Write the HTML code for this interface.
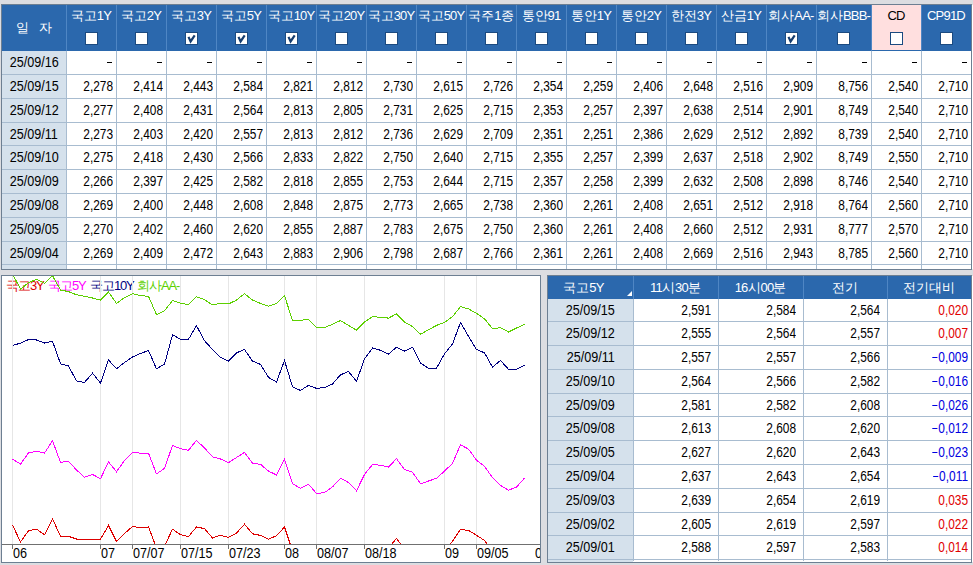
<!DOCTYPE html>
<html lang="ko"><head><meta charset="utf-8"><style>
html,body{margin:0;padding:0}
body{width:973px;height:565px;overflow:hidden;background:#dcdde1;position:relative;font-family:"Liberation Sans",sans-serif;font-size:13px}
body>div{position:absolute}
.t{white-space:nowrap;overflow:hidden}
</style></head><body>
<div style="left:1px;top:4px;width:971px;height:266px;background:#6d7f92"></div>
<div style="left:2px;top:51px;width:969px;height:218px;background:#fff"></div>
<div style="left:2px;top:51px;width:64px;height:218px;background:#d5e1ec"></div>
<div style="left:2px;top:5px;width:969px;height:46px;background:#2b68ad"></div>
<div style="left:872px;top:5px;width:49px;height:45px;background:#ffdfdf"></div>
<div style="left:66px;top:5px;width:1px;height:46px;background:#4f86c4"></div>
<div style="left:116px;top:5px;width:1px;height:46px;background:#4f86c4"></div>
<div style="left:166px;top:5px;width:1px;height:46px;background:#4f86c4"></div>
<div style="left:216px;top:5px;width:1px;height:46px;background:#4f86c4"></div>
<div style="left:266px;top:5px;width:1px;height:46px;background:#4f86c4"></div>
<div style="left:316px;top:5px;width:1px;height:46px;background:#4f86c4"></div>
<div style="left:366px;top:5px;width:1px;height:46px;background:#4f86c4"></div>
<div style="left:416px;top:5px;width:1px;height:46px;background:#4f86c4"></div>
<div style="left:466px;top:5px;width:1px;height:46px;background:#4f86c4"></div>
<div style="left:516px;top:5px;width:1px;height:46px;background:#4f86c4"></div>
<div style="left:566px;top:5px;width:1px;height:46px;background:#4f86c4"></div>
<div style="left:616px;top:5px;width:1px;height:46px;background:#4f86c4"></div>
<div style="left:666px;top:5px;width:1px;height:46px;background:#4f86c4"></div>
<div style="left:716px;top:5px;width:1px;height:46px;background:#4f86c4"></div>
<div style="left:766px;top:5px;width:1px;height:46px;background:#4f86c4"></div>
<div style="left:816px;top:5px;width:1px;height:46px;background:#4f86c4"></div>
<div style="left:871px;top:5px;width:1px;height:46px;background:#4f86c4"></div>
<div style="left:921px;top:5px;width:1px;height:46px;background:#4f86c4"></div>
<div style="left:66px;top:51px;width:1px;height:218px;background:#a8bcd0"></div>
<div style="left:116px;top:51px;width:1px;height:218px;background:#a8bcd0"></div>
<div style="left:166px;top:51px;width:1px;height:218px;background:#a8bcd0"></div>
<div style="left:216px;top:51px;width:1px;height:218px;background:#a8bcd0"></div>
<div style="left:266px;top:51px;width:1px;height:218px;background:#a8bcd0"></div>
<div style="left:316px;top:51px;width:1px;height:218px;background:#a8bcd0"></div>
<div style="left:366px;top:51px;width:1px;height:218px;background:#a8bcd0"></div>
<div style="left:416px;top:51px;width:1px;height:218px;background:#a8bcd0"></div>
<div style="left:466px;top:51px;width:1px;height:218px;background:#a8bcd0"></div>
<div style="left:516px;top:51px;width:1px;height:218px;background:#a8bcd0"></div>
<div style="left:566px;top:51px;width:1px;height:218px;background:#a8bcd0"></div>
<div style="left:616px;top:51px;width:1px;height:218px;background:#a8bcd0"></div>
<div style="left:666px;top:51px;width:1px;height:218px;background:#a8bcd0"></div>
<div style="left:716px;top:51px;width:1px;height:218px;background:#a8bcd0"></div>
<div style="left:766px;top:51px;width:1px;height:218px;background:#a8bcd0"></div>
<div style="left:816px;top:51px;width:1px;height:218px;background:#a8bcd0"></div>
<div style="left:871px;top:51px;width:1px;height:218px;background:#a8bcd0"></div>
<div style="left:921px;top:51px;width:1px;height:218px;background:#a8bcd0"></div>
<div style="left:2px;top:74px;width:969px;height:1px;background:#a8bcd0"></div>
<div style="left:2px;top:98px;width:969px;height:1px;background:#a8bcd0"></div>
<div style="left:2px;top:122px;width:969px;height:1px;background:#a8bcd0"></div>
<div style="left:2px;top:145px;width:969px;height:1px;background:#a8bcd0"></div>
<div style="left:2px;top:169px;width:969px;height:1px;background:#a8bcd0"></div>
<div style="left:2px;top:193px;width:969px;height:1px;background:#a8bcd0"></div>
<div style="left:2px;top:217px;width:969px;height:1px;background:#a8bcd0"></div>
<div style="left:2px;top:241px;width:969px;height:1px;background:#a8bcd0"></div>
<div style="left:2px;top:264px;width:969px;height:1px;background:#a8bcd0"></div>
<div class="t" style="left:2px;top:5px;width:64px;height:46px;line-height:46px;color:#fff;text-align:center">일&nbsp;&nbsp;&nbsp;자</div>
<div class="t" style="left:61px;top:9px;width:60px;height:14px;line-height:14px;color:#fff;text-align:center;overflow:visible">국고<span style="letter-spacing:-0.8px">1Y</span></div>
<div style="left:85px;top:32px;width:11px;height:11px;border:1px solid #1b4a80;background:#fff"></div>
<div class="t" style="left:111px;top:9px;width:60px;height:14px;line-height:14px;color:#fff;text-align:center;overflow:visible">국고<span style="letter-spacing:-0.8px">2Y</span></div>
<div style="left:135px;top:32px;width:11px;height:11px;border:1px solid #1b4a80;background:#fff"></div>
<div class="t" style="left:161px;top:9px;width:60px;height:14px;line-height:14px;color:#fff;text-align:center;overflow:visible">국고<span style="letter-spacing:-0.8px">3Y</span></div>
<div style="left:185px;top:32px;width:11px;height:11px;border:1px solid #1b4a80;background:#fff"><svg width="13" height="13" viewBox="0 0 13 13" style="position:absolute;left:-1px;top:-1px"><path d="M3.5 4.9 L5.6 9.4 L9.7 3.3" stroke="#163e70" stroke-width="2.2" fill="none"/></svg></div>
<div class="t" style="left:211px;top:9px;width:60px;height:14px;line-height:14px;color:#fff;text-align:center;overflow:visible">국고<span style="letter-spacing:-0.8px">5Y</span></div>
<div style="left:235px;top:32px;width:11px;height:11px;border:1px solid #1b4a80;background:#fff"><svg width="13" height="13" viewBox="0 0 13 13" style="position:absolute;left:-1px;top:-1px"><path d="M3.5 4.9 L5.6 9.4 L9.7 3.3" stroke="#163e70" stroke-width="2.2" fill="none"/></svg></div>
<div class="t" style="left:261px;top:9px;width:60px;height:14px;line-height:14px;color:#fff;text-align:center;overflow:visible">국고<span style="letter-spacing:-0.8px">10Y</span></div>
<div style="left:285px;top:32px;width:11px;height:11px;border:1px solid #1b4a80;background:#fff"><svg width="13" height="13" viewBox="0 0 13 13" style="position:absolute;left:-1px;top:-1px"><path d="M3.5 4.9 L5.6 9.4 L9.7 3.3" stroke="#163e70" stroke-width="2.2" fill="none"/></svg></div>
<div class="t" style="left:311px;top:9px;width:60px;height:14px;line-height:14px;color:#fff;text-align:center;overflow:visible">국고<span style="letter-spacing:-0.8px">20Y</span></div>
<div style="left:335px;top:32px;width:11px;height:11px;border:1px solid #1b4a80;background:#fff"></div>
<div class="t" style="left:361px;top:9px;width:60px;height:14px;line-height:14px;color:#fff;text-align:center;overflow:visible">국고<span style="letter-spacing:-0.8px">30Y</span></div>
<div style="left:385px;top:32px;width:11px;height:11px;border:1px solid #1b4a80;background:#fff"></div>
<div class="t" style="left:411px;top:9px;width:60px;height:14px;line-height:14px;color:#fff;text-align:center;overflow:visible">국고<span style="letter-spacing:-0.8px">50Y</span></div>
<div style="left:435px;top:32px;width:11px;height:11px;border:1px solid #1b4a80;background:#fff"></div>
<div class="t" style="left:461px;top:9px;width:60px;height:14px;line-height:14px;color:#fff;text-align:center;overflow:visible">국주<span style="letter-spacing:-0.8px">1</span>종</div>
<div style="left:485px;top:32px;width:11px;height:11px;border:1px solid #1b4a80;background:#fff"></div>
<div class="t" style="left:511px;top:9px;width:60px;height:14px;line-height:14px;color:#fff;text-align:center;overflow:visible">통안<span style="letter-spacing:-0.8px">91</span></div>
<div style="left:535px;top:32px;width:11px;height:11px;border:1px solid #1b4a80;background:#fff"></div>
<div class="t" style="left:561px;top:9px;width:60px;height:14px;line-height:14px;color:#fff;text-align:center;overflow:visible">통안<span style="letter-spacing:-0.8px">1Y</span></div>
<div style="left:585px;top:32px;width:11px;height:11px;border:1px solid #1b4a80;background:#fff"></div>
<div class="t" style="left:611px;top:9px;width:60px;height:14px;line-height:14px;color:#fff;text-align:center;overflow:visible">통안<span style="letter-spacing:-0.8px">2Y</span></div>
<div style="left:635px;top:32px;width:11px;height:11px;border:1px solid #1b4a80;background:#fff"></div>
<div class="t" style="left:661px;top:9px;width:60px;height:14px;line-height:14px;color:#fff;text-align:center;overflow:visible">한전<span style="letter-spacing:-0.8px">3Y</span></div>
<div style="left:685px;top:32px;width:11px;height:11px;border:1px solid #1b4a80;background:#fff"></div>
<div class="t" style="left:711px;top:9px;width:60px;height:14px;line-height:14px;color:#fff;text-align:center;overflow:visible">산금<span style="letter-spacing:-0.8px">1Y</span></div>
<div style="left:735px;top:32px;width:11px;height:11px;border:1px solid #1b4a80;background:#fff"></div>
<div class="t" style="left:761px;top:9px;width:60px;height:14px;line-height:14px;color:#fff;text-align:center;overflow:visible">회사<span style="letter-spacing:-0.8px">AA-</span></div>
<div style="left:785px;top:32px;width:11px;height:11px;border:1px solid #1b4a80;background:#fff"><svg width="13" height="13" viewBox="0 0 13 13" style="position:absolute;left:-1px;top:-1px"><path d="M3.5 4.9 L5.6 9.4 L9.7 3.3" stroke="#163e70" stroke-width="2.2" fill="none"/></svg></div>
<div class="t" style="left:811px;top:9px;width:65px;height:14px;line-height:14px;color:#fff;text-align:center;overflow:visible">회사<span style="letter-spacing:-0.8px">BBB-</span></div>
<div style="left:837px;top:32px;width:11px;height:11px;border:1px solid #1b4a80;background:#fff"></div>
<div class="t" style="left:866px;top:9px;width:60px;height:14px;line-height:14px;color:#000;text-align:center;overflow:visible"><span style="letter-spacing:-0.8px">CD</span></div>
<div style="left:890px;top:32px;width:11px;height:11px;border:1px solid #1b4a80;background:#fff"></div>
<div class="t" style="left:916px;top:9px;width:60px;height:14px;line-height:14px;color:#fff;text-align:center;overflow:visible"><span style="letter-spacing:-0.8px">CP91D</span></div>
<div style="left:940px;top:32px;width:11px;height:11px;border:1px solid #1b4a80;background:#fff"></div>
<div class="t" style="left:2px;top:51px;width:64px;height:23px;line-height:23px;color:#000;text-align:center;font-size:14px"><span style="display:inline-block;transform:scaleX(0.9);transform-origin:center center">25/09/16</span></div>
<div style="left:107px;top:62px;width:5px;height:1px;background:#000"></div>
<div style="left:157px;top:62px;width:5px;height:1px;background:#000"></div>
<div style="left:207px;top:62px;width:5px;height:1px;background:#000"></div>
<div style="left:257px;top:62px;width:5px;height:1px;background:#000"></div>
<div style="left:307px;top:62px;width:5px;height:1px;background:#000"></div>
<div style="left:357px;top:62px;width:5px;height:1px;background:#000"></div>
<div style="left:407px;top:62px;width:5px;height:1px;background:#000"></div>
<div style="left:457px;top:62px;width:5px;height:1px;background:#000"></div>
<div style="left:507px;top:62px;width:5px;height:1px;background:#000"></div>
<div style="left:557px;top:62px;width:5px;height:1px;background:#000"></div>
<div style="left:607px;top:62px;width:5px;height:1px;background:#000"></div>
<div style="left:657px;top:62px;width:5px;height:1px;background:#000"></div>
<div style="left:707px;top:62px;width:5px;height:1px;background:#000"></div>
<div style="left:757px;top:62px;width:5px;height:1px;background:#000"></div>
<div style="left:807px;top:62px;width:5px;height:1px;background:#000"></div>
<div style="left:862px;top:62px;width:5px;height:1px;background:#000"></div>
<div style="left:912px;top:62px;width:5px;height:1px;background:#000"></div>
<div style="left:962px;top:62px;width:5px;height:1px;background:#000"></div>
<div class="t" style="left:2px;top:75px;width:64px;height:23px;line-height:23px;color:#000;text-align:center;font-size:14px"><span style="display:inline-block;transform:scaleX(0.9);transform-origin:center center">25/09/15</span></div>
<div class="t" style="left:67px;top:75px;width:46px;height:23px;line-height:23px;color:#000;text-align:right;font-size:14px"><span style="display:inline-block;transform:scaleX(0.85);transform-origin:right center">2,278</span></div>
<div class="t" style="left:117px;top:75px;width:46px;height:23px;line-height:23px;color:#000;text-align:right;font-size:14px"><span style="display:inline-block;transform:scaleX(0.85);transform-origin:right center">2,414</span></div>
<div class="t" style="left:167px;top:75px;width:46px;height:23px;line-height:23px;color:#000;text-align:right;font-size:14px"><span style="display:inline-block;transform:scaleX(0.85);transform-origin:right center">2,443</span></div>
<div class="t" style="left:217px;top:75px;width:46px;height:23px;line-height:23px;color:#000;text-align:right;font-size:14px"><span style="display:inline-block;transform:scaleX(0.85);transform-origin:right center">2,584</span></div>
<div class="t" style="left:267px;top:75px;width:46px;height:23px;line-height:23px;color:#000;text-align:right;font-size:14px"><span style="display:inline-block;transform:scaleX(0.85);transform-origin:right center">2,821</span></div>
<div class="t" style="left:317px;top:75px;width:46px;height:23px;line-height:23px;color:#000;text-align:right;font-size:14px"><span style="display:inline-block;transform:scaleX(0.85);transform-origin:right center">2,812</span></div>
<div class="t" style="left:367px;top:75px;width:46px;height:23px;line-height:23px;color:#000;text-align:right;font-size:14px"><span style="display:inline-block;transform:scaleX(0.85);transform-origin:right center">2,730</span></div>
<div class="t" style="left:417px;top:75px;width:46px;height:23px;line-height:23px;color:#000;text-align:right;font-size:14px"><span style="display:inline-block;transform:scaleX(0.85);transform-origin:right center">2,615</span></div>
<div class="t" style="left:467px;top:75px;width:46px;height:23px;line-height:23px;color:#000;text-align:right;font-size:14px"><span style="display:inline-block;transform:scaleX(0.85);transform-origin:right center">2,726</span></div>
<div class="t" style="left:517px;top:75px;width:46px;height:23px;line-height:23px;color:#000;text-align:right;font-size:14px"><span style="display:inline-block;transform:scaleX(0.85);transform-origin:right center">2,354</span></div>
<div class="t" style="left:567px;top:75px;width:46px;height:23px;line-height:23px;color:#000;text-align:right;font-size:14px"><span style="display:inline-block;transform:scaleX(0.85);transform-origin:right center">2,259</span></div>
<div class="t" style="left:617px;top:75px;width:46px;height:23px;line-height:23px;color:#000;text-align:right;font-size:14px"><span style="display:inline-block;transform:scaleX(0.85);transform-origin:right center">2,406</span></div>
<div class="t" style="left:667px;top:75px;width:46px;height:23px;line-height:23px;color:#000;text-align:right;font-size:14px"><span style="display:inline-block;transform:scaleX(0.85);transform-origin:right center">2,648</span></div>
<div class="t" style="left:717px;top:75px;width:46px;height:23px;line-height:23px;color:#000;text-align:right;font-size:14px"><span style="display:inline-block;transform:scaleX(0.85);transform-origin:right center">2,516</span></div>
<div class="t" style="left:767px;top:75px;width:46px;height:23px;line-height:23px;color:#000;text-align:right;font-size:14px"><span style="display:inline-block;transform:scaleX(0.85);transform-origin:right center">2,909</span></div>
<div class="t" style="left:817px;top:75px;width:51px;height:23px;line-height:23px;color:#000;text-align:right;font-size:14px"><span style="display:inline-block;transform:scaleX(0.85);transform-origin:right center">8,756</span></div>
<div class="t" style="left:872px;top:75px;width:46px;height:23px;line-height:23px;color:#000;text-align:right;font-size:14px"><span style="display:inline-block;transform:scaleX(0.85);transform-origin:right center">2,540</span></div>
<div class="t" style="left:922px;top:75px;width:46px;height:23px;line-height:23px;color:#000;text-align:right;font-size:14px"><span style="display:inline-block;transform:scaleX(0.85);transform-origin:right center">2,710</span></div>
<div class="t" style="left:2px;top:99px;width:64px;height:23px;line-height:23px;color:#000;text-align:center;font-size:14px"><span style="display:inline-block;transform:scaleX(0.9);transform-origin:center center">25/09/12</span></div>
<div class="t" style="left:67px;top:99px;width:46px;height:23px;line-height:23px;color:#000;text-align:right;font-size:14px"><span style="display:inline-block;transform:scaleX(0.85);transform-origin:right center">2,277</span></div>
<div class="t" style="left:117px;top:99px;width:46px;height:23px;line-height:23px;color:#000;text-align:right;font-size:14px"><span style="display:inline-block;transform:scaleX(0.85);transform-origin:right center">2,408</span></div>
<div class="t" style="left:167px;top:99px;width:46px;height:23px;line-height:23px;color:#000;text-align:right;font-size:14px"><span style="display:inline-block;transform:scaleX(0.85);transform-origin:right center">2,431</span></div>
<div class="t" style="left:217px;top:99px;width:46px;height:23px;line-height:23px;color:#000;text-align:right;font-size:14px"><span style="display:inline-block;transform:scaleX(0.85);transform-origin:right center">2,564</span></div>
<div class="t" style="left:267px;top:99px;width:46px;height:23px;line-height:23px;color:#000;text-align:right;font-size:14px"><span style="display:inline-block;transform:scaleX(0.85);transform-origin:right center">2,813</span></div>
<div class="t" style="left:317px;top:99px;width:46px;height:23px;line-height:23px;color:#000;text-align:right;font-size:14px"><span style="display:inline-block;transform:scaleX(0.85);transform-origin:right center">2,805</span></div>
<div class="t" style="left:367px;top:99px;width:46px;height:23px;line-height:23px;color:#000;text-align:right;font-size:14px"><span style="display:inline-block;transform:scaleX(0.85);transform-origin:right center">2,731</span></div>
<div class="t" style="left:417px;top:99px;width:46px;height:23px;line-height:23px;color:#000;text-align:right;font-size:14px"><span style="display:inline-block;transform:scaleX(0.85);transform-origin:right center">2,625</span></div>
<div class="t" style="left:467px;top:99px;width:46px;height:23px;line-height:23px;color:#000;text-align:right;font-size:14px"><span style="display:inline-block;transform:scaleX(0.85);transform-origin:right center">2,715</span></div>
<div class="t" style="left:517px;top:99px;width:46px;height:23px;line-height:23px;color:#000;text-align:right;font-size:14px"><span style="display:inline-block;transform:scaleX(0.85);transform-origin:right center">2,353</span></div>
<div class="t" style="left:567px;top:99px;width:46px;height:23px;line-height:23px;color:#000;text-align:right;font-size:14px"><span style="display:inline-block;transform:scaleX(0.85);transform-origin:right center">2,257</span></div>
<div class="t" style="left:617px;top:99px;width:46px;height:23px;line-height:23px;color:#000;text-align:right;font-size:14px"><span style="display:inline-block;transform:scaleX(0.85);transform-origin:right center">2,397</span></div>
<div class="t" style="left:667px;top:99px;width:46px;height:23px;line-height:23px;color:#000;text-align:right;font-size:14px"><span style="display:inline-block;transform:scaleX(0.85);transform-origin:right center">2,638</span></div>
<div class="t" style="left:717px;top:99px;width:46px;height:23px;line-height:23px;color:#000;text-align:right;font-size:14px"><span style="display:inline-block;transform:scaleX(0.85);transform-origin:right center">2,514</span></div>
<div class="t" style="left:767px;top:99px;width:46px;height:23px;line-height:23px;color:#000;text-align:right;font-size:14px"><span style="display:inline-block;transform:scaleX(0.85);transform-origin:right center">2,901</span></div>
<div class="t" style="left:817px;top:99px;width:51px;height:23px;line-height:23px;color:#000;text-align:right;font-size:14px"><span style="display:inline-block;transform:scaleX(0.85);transform-origin:right center">8,749</span></div>
<div class="t" style="left:872px;top:99px;width:46px;height:23px;line-height:23px;color:#000;text-align:right;font-size:14px"><span style="display:inline-block;transform:scaleX(0.85);transform-origin:right center">2,540</span></div>
<div class="t" style="left:922px;top:99px;width:46px;height:23px;line-height:23px;color:#000;text-align:right;font-size:14px"><span style="display:inline-block;transform:scaleX(0.85);transform-origin:right center">2,710</span></div>
<div class="t" style="left:2px;top:123px;width:64px;height:22px;line-height:22px;color:#000;text-align:center;font-size:14px"><span style="display:inline-block;transform:scaleX(0.9);transform-origin:center center">25/09/11</span></div>
<div class="t" style="left:67px;top:123px;width:46px;height:22px;line-height:22px;color:#000;text-align:right;font-size:14px"><span style="display:inline-block;transform:scaleX(0.85);transform-origin:right center">2,273</span></div>
<div class="t" style="left:117px;top:123px;width:46px;height:22px;line-height:22px;color:#000;text-align:right;font-size:14px"><span style="display:inline-block;transform:scaleX(0.85);transform-origin:right center">2,403</span></div>
<div class="t" style="left:167px;top:123px;width:46px;height:22px;line-height:22px;color:#000;text-align:right;font-size:14px"><span style="display:inline-block;transform:scaleX(0.85);transform-origin:right center">2,420</span></div>
<div class="t" style="left:217px;top:123px;width:46px;height:22px;line-height:22px;color:#000;text-align:right;font-size:14px"><span style="display:inline-block;transform:scaleX(0.85);transform-origin:right center">2,557</span></div>
<div class="t" style="left:267px;top:123px;width:46px;height:22px;line-height:22px;color:#000;text-align:right;font-size:14px"><span style="display:inline-block;transform:scaleX(0.85);transform-origin:right center">2,813</span></div>
<div class="t" style="left:317px;top:123px;width:46px;height:22px;line-height:22px;color:#000;text-align:right;font-size:14px"><span style="display:inline-block;transform:scaleX(0.85);transform-origin:right center">2,812</span></div>
<div class="t" style="left:367px;top:123px;width:46px;height:22px;line-height:22px;color:#000;text-align:right;font-size:14px"><span style="display:inline-block;transform:scaleX(0.85);transform-origin:right center">2,736</span></div>
<div class="t" style="left:417px;top:123px;width:46px;height:22px;line-height:22px;color:#000;text-align:right;font-size:14px"><span style="display:inline-block;transform:scaleX(0.85);transform-origin:right center">2,629</span></div>
<div class="t" style="left:467px;top:123px;width:46px;height:22px;line-height:22px;color:#000;text-align:right;font-size:14px"><span style="display:inline-block;transform:scaleX(0.85);transform-origin:right center">2,709</span></div>
<div class="t" style="left:517px;top:123px;width:46px;height:22px;line-height:22px;color:#000;text-align:right;font-size:14px"><span style="display:inline-block;transform:scaleX(0.85);transform-origin:right center">2,351</span></div>
<div class="t" style="left:567px;top:123px;width:46px;height:22px;line-height:22px;color:#000;text-align:right;font-size:14px"><span style="display:inline-block;transform:scaleX(0.85);transform-origin:right center">2,251</span></div>
<div class="t" style="left:617px;top:123px;width:46px;height:22px;line-height:22px;color:#000;text-align:right;font-size:14px"><span style="display:inline-block;transform:scaleX(0.85);transform-origin:right center">2,386</span></div>
<div class="t" style="left:667px;top:123px;width:46px;height:22px;line-height:22px;color:#000;text-align:right;font-size:14px"><span style="display:inline-block;transform:scaleX(0.85);transform-origin:right center">2,629</span></div>
<div class="t" style="left:717px;top:123px;width:46px;height:22px;line-height:22px;color:#000;text-align:right;font-size:14px"><span style="display:inline-block;transform:scaleX(0.85);transform-origin:right center">2,512</span></div>
<div class="t" style="left:767px;top:123px;width:46px;height:22px;line-height:22px;color:#000;text-align:right;font-size:14px"><span style="display:inline-block;transform:scaleX(0.85);transform-origin:right center">2,892</span></div>
<div class="t" style="left:817px;top:123px;width:51px;height:22px;line-height:22px;color:#000;text-align:right;font-size:14px"><span style="display:inline-block;transform:scaleX(0.85);transform-origin:right center">8,739</span></div>
<div class="t" style="left:872px;top:123px;width:46px;height:22px;line-height:22px;color:#000;text-align:right;font-size:14px"><span style="display:inline-block;transform:scaleX(0.85);transform-origin:right center">2,540</span></div>
<div class="t" style="left:922px;top:123px;width:46px;height:22px;line-height:22px;color:#000;text-align:right;font-size:14px"><span style="display:inline-block;transform:scaleX(0.85);transform-origin:right center">2,710</span></div>
<div class="t" style="left:2px;top:146px;width:64px;height:23px;line-height:23px;color:#000;text-align:center;font-size:14px"><span style="display:inline-block;transform:scaleX(0.9);transform-origin:center center">25/09/10</span></div>
<div class="t" style="left:67px;top:146px;width:46px;height:23px;line-height:23px;color:#000;text-align:right;font-size:14px"><span style="display:inline-block;transform:scaleX(0.85);transform-origin:right center">2,275</span></div>
<div class="t" style="left:117px;top:146px;width:46px;height:23px;line-height:23px;color:#000;text-align:right;font-size:14px"><span style="display:inline-block;transform:scaleX(0.85);transform-origin:right center">2,418</span></div>
<div class="t" style="left:167px;top:146px;width:46px;height:23px;line-height:23px;color:#000;text-align:right;font-size:14px"><span style="display:inline-block;transform:scaleX(0.85);transform-origin:right center">2,430</span></div>
<div class="t" style="left:217px;top:146px;width:46px;height:23px;line-height:23px;color:#000;text-align:right;font-size:14px"><span style="display:inline-block;transform:scaleX(0.85);transform-origin:right center">2,566</span></div>
<div class="t" style="left:267px;top:146px;width:46px;height:23px;line-height:23px;color:#000;text-align:right;font-size:14px"><span style="display:inline-block;transform:scaleX(0.85);transform-origin:right center">2,833</span></div>
<div class="t" style="left:317px;top:146px;width:46px;height:23px;line-height:23px;color:#000;text-align:right;font-size:14px"><span style="display:inline-block;transform:scaleX(0.85);transform-origin:right center">2,822</span></div>
<div class="t" style="left:367px;top:146px;width:46px;height:23px;line-height:23px;color:#000;text-align:right;font-size:14px"><span style="display:inline-block;transform:scaleX(0.85);transform-origin:right center">2,750</span></div>
<div class="t" style="left:417px;top:146px;width:46px;height:23px;line-height:23px;color:#000;text-align:right;font-size:14px"><span style="display:inline-block;transform:scaleX(0.85);transform-origin:right center">2,640</span></div>
<div class="t" style="left:467px;top:146px;width:46px;height:23px;line-height:23px;color:#000;text-align:right;font-size:14px"><span style="display:inline-block;transform:scaleX(0.85);transform-origin:right center">2,715</span></div>
<div class="t" style="left:517px;top:146px;width:46px;height:23px;line-height:23px;color:#000;text-align:right;font-size:14px"><span style="display:inline-block;transform:scaleX(0.85);transform-origin:right center">2,355</span></div>
<div class="t" style="left:567px;top:146px;width:46px;height:23px;line-height:23px;color:#000;text-align:right;font-size:14px"><span style="display:inline-block;transform:scaleX(0.85);transform-origin:right center">2,257</span></div>
<div class="t" style="left:617px;top:146px;width:46px;height:23px;line-height:23px;color:#000;text-align:right;font-size:14px"><span style="display:inline-block;transform:scaleX(0.85);transform-origin:right center">2,399</span></div>
<div class="t" style="left:667px;top:146px;width:46px;height:23px;line-height:23px;color:#000;text-align:right;font-size:14px"><span style="display:inline-block;transform:scaleX(0.85);transform-origin:right center">2,637</span></div>
<div class="t" style="left:717px;top:146px;width:46px;height:23px;line-height:23px;color:#000;text-align:right;font-size:14px"><span style="display:inline-block;transform:scaleX(0.85);transform-origin:right center">2,518</span></div>
<div class="t" style="left:767px;top:146px;width:46px;height:23px;line-height:23px;color:#000;text-align:right;font-size:14px"><span style="display:inline-block;transform:scaleX(0.85);transform-origin:right center">2,902</span></div>
<div class="t" style="left:817px;top:146px;width:51px;height:23px;line-height:23px;color:#000;text-align:right;font-size:14px"><span style="display:inline-block;transform:scaleX(0.85);transform-origin:right center">8,749</span></div>
<div class="t" style="left:872px;top:146px;width:46px;height:23px;line-height:23px;color:#000;text-align:right;font-size:14px"><span style="display:inline-block;transform:scaleX(0.85);transform-origin:right center">2,550</span></div>
<div class="t" style="left:922px;top:146px;width:46px;height:23px;line-height:23px;color:#000;text-align:right;font-size:14px"><span style="display:inline-block;transform:scaleX(0.85);transform-origin:right center">2,710</span></div>
<div class="t" style="left:2px;top:170px;width:64px;height:23px;line-height:23px;color:#000;text-align:center;font-size:14px"><span style="display:inline-block;transform:scaleX(0.9);transform-origin:center center">25/09/09</span></div>
<div class="t" style="left:67px;top:170px;width:46px;height:23px;line-height:23px;color:#000;text-align:right;font-size:14px"><span style="display:inline-block;transform:scaleX(0.85);transform-origin:right center">2,266</span></div>
<div class="t" style="left:117px;top:170px;width:46px;height:23px;line-height:23px;color:#000;text-align:right;font-size:14px"><span style="display:inline-block;transform:scaleX(0.85);transform-origin:right center">2,397</span></div>
<div class="t" style="left:167px;top:170px;width:46px;height:23px;line-height:23px;color:#000;text-align:right;font-size:14px"><span style="display:inline-block;transform:scaleX(0.85);transform-origin:right center">2,425</span></div>
<div class="t" style="left:217px;top:170px;width:46px;height:23px;line-height:23px;color:#000;text-align:right;font-size:14px"><span style="display:inline-block;transform:scaleX(0.85);transform-origin:right center">2,582</span></div>
<div class="t" style="left:267px;top:170px;width:46px;height:23px;line-height:23px;color:#000;text-align:right;font-size:14px"><span style="display:inline-block;transform:scaleX(0.85);transform-origin:right center">2,818</span></div>
<div class="t" style="left:317px;top:170px;width:46px;height:23px;line-height:23px;color:#000;text-align:right;font-size:14px"><span style="display:inline-block;transform:scaleX(0.85);transform-origin:right center">2,855</span></div>
<div class="t" style="left:367px;top:170px;width:46px;height:23px;line-height:23px;color:#000;text-align:right;font-size:14px"><span style="display:inline-block;transform:scaleX(0.85);transform-origin:right center">2,753</span></div>
<div class="t" style="left:417px;top:170px;width:46px;height:23px;line-height:23px;color:#000;text-align:right;font-size:14px"><span style="display:inline-block;transform:scaleX(0.85);transform-origin:right center">2,644</span></div>
<div class="t" style="left:467px;top:170px;width:46px;height:23px;line-height:23px;color:#000;text-align:right;font-size:14px"><span style="display:inline-block;transform:scaleX(0.85);transform-origin:right center">2,715</span></div>
<div class="t" style="left:517px;top:170px;width:46px;height:23px;line-height:23px;color:#000;text-align:right;font-size:14px"><span style="display:inline-block;transform:scaleX(0.85);transform-origin:right center">2,357</span></div>
<div class="t" style="left:567px;top:170px;width:46px;height:23px;line-height:23px;color:#000;text-align:right;font-size:14px"><span style="display:inline-block;transform:scaleX(0.85);transform-origin:right center">2,258</span></div>
<div class="t" style="left:617px;top:170px;width:46px;height:23px;line-height:23px;color:#000;text-align:right;font-size:14px"><span style="display:inline-block;transform:scaleX(0.85);transform-origin:right center">2,399</span></div>
<div class="t" style="left:667px;top:170px;width:46px;height:23px;line-height:23px;color:#000;text-align:right;font-size:14px"><span style="display:inline-block;transform:scaleX(0.85);transform-origin:right center">2,632</span></div>
<div class="t" style="left:717px;top:170px;width:46px;height:23px;line-height:23px;color:#000;text-align:right;font-size:14px"><span style="display:inline-block;transform:scaleX(0.85);transform-origin:right center">2,508</span></div>
<div class="t" style="left:767px;top:170px;width:46px;height:23px;line-height:23px;color:#000;text-align:right;font-size:14px"><span style="display:inline-block;transform:scaleX(0.85);transform-origin:right center">2,898</span></div>
<div class="t" style="left:817px;top:170px;width:51px;height:23px;line-height:23px;color:#000;text-align:right;font-size:14px"><span style="display:inline-block;transform:scaleX(0.85);transform-origin:right center">8,746</span></div>
<div class="t" style="left:872px;top:170px;width:46px;height:23px;line-height:23px;color:#000;text-align:right;font-size:14px"><span style="display:inline-block;transform:scaleX(0.85);transform-origin:right center">2,540</span></div>
<div class="t" style="left:922px;top:170px;width:46px;height:23px;line-height:23px;color:#000;text-align:right;font-size:14px"><span style="display:inline-block;transform:scaleX(0.85);transform-origin:right center">2,710</span></div>
<div class="t" style="left:2px;top:194px;width:64px;height:23px;line-height:23px;color:#000;text-align:center;font-size:14px"><span style="display:inline-block;transform:scaleX(0.9);transform-origin:center center">25/09/08</span></div>
<div class="t" style="left:67px;top:194px;width:46px;height:23px;line-height:23px;color:#000;text-align:right;font-size:14px"><span style="display:inline-block;transform:scaleX(0.85);transform-origin:right center">2,269</span></div>
<div class="t" style="left:117px;top:194px;width:46px;height:23px;line-height:23px;color:#000;text-align:right;font-size:14px"><span style="display:inline-block;transform:scaleX(0.85);transform-origin:right center">2,400</span></div>
<div class="t" style="left:167px;top:194px;width:46px;height:23px;line-height:23px;color:#000;text-align:right;font-size:14px"><span style="display:inline-block;transform:scaleX(0.85);transform-origin:right center">2,448</span></div>
<div class="t" style="left:217px;top:194px;width:46px;height:23px;line-height:23px;color:#000;text-align:right;font-size:14px"><span style="display:inline-block;transform:scaleX(0.85);transform-origin:right center">2,608</span></div>
<div class="t" style="left:267px;top:194px;width:46px;height:23px;line-height:23px;color:#000;text-align:right;font-size:14px"><span style="display:inline-block;transform:scaleX(0.85);transform-origin:right center">2,848</span></div>
<div class="t" style="left:317px;top:194px;width:46px;height:23px;line-height:23px;color:#000;text-align:right;font-size:14px"><span style="display:inline-block;transform:scaleX(0.85);transform-origin:right center">2,875</span></div>
<div class="t" style="left:367px;top:194px;width:46px;height:23px;line-height:23px;color:#000;text-align:right;font-size:14px"><span style="display:inline-block;transform:scaleX(0.85);transform-origin:right center">2,773</span></div>
<div class="t" style="left:417px;top:194px;width:46px;height:23px;line-height:23px;color:#000;text-align:right;font-size:14px"><span style="display:inline-block;transform:scaleX(0.85);transform-origin:right center">2,665</span></div>
<div class="t" style="left:467px;top:194px;width:46px;height:23px;line-height:23px;color:#000;text-align:right;font-size:14px"><span style="display:inline-block;transform:scaleX(0.85);transform-origin:right center">2,738</span></div>
<div class="t" style="left:517px;top:194px;width:46px;height:23px;line-height:23px;color:#000;text-align:right;font-size:14px"><span style="display:inline-block;transform:scaleX(0.85);transform-origin:right center">2,360</span></div>
<div class="t" style="left:567px;top:194px;width:46px;height:23px;line-height:23px;color:#000;text-align:right;font-size:14px"><span style="display:inline-block;transform:scaleX(0.85);transform-origin:right center">2,261</span></div>
<div class="t" style="left:617px;top:194px;width:46px;height:23px;line-height:23px;color:#000;text-align:right;font-size:14px"><span style="display:inline-block;transform:scaleX(0.85);transform-origin:right center">2,408</span></div>
<div class="t" style="left:667px;top:194px;width:46px;height:23px;line-height:23px;color:#000;text-align:right;font-size:14px"><span style="display:inline-block;transform:scaleX(0.85);transform-origin:right center">2,651</span></div>
<div class="t" style="left:717px;top:194px;width:46px;height:23px;line-height:23px;color:#000;text-align:right;font-size:14px"><span style="display:inline-block;transform:scaleX(0.85);transform-origin:right center">2,512</span></div>
<div class="t" style="left:767px;top:194px;width:46px;height:23px;line-height:23px;color:#000;text-align:right;font-size:14px"><span style="display:inline-block;transform:scaleX(0.85);transform-origin:right center">2,918</span></div>
<div class="t" style="left:817px;top:194px;width:51px;height:23px;line-height:23px;color:#000;text-align:right;font-size:14px"><span style="display:inline-block;transform:scaleX(0.85);transform-origin:right center">8,764</span></div>
<div class="t" style="left:872px;top:194px;width:46px;height:23px;line-height:23px;color:#000;text-align:right;font-size:14px"><span style="display:inline-block;transform:scaleX(0.85);transform-origin:right center">2,560</span></div>
<div class="t" style="left:922px;top:194px;width:46px;height:23px;line-height:23px;color:#000;text-align:right;font-size:14px"><span style="display:inline-block;transform:scaleX(0.85);transform-origin:right center">2,710</span></div>
<div class="t" style="left:2px;top:218px;width:64px;height:23px;line-height:23px;color:#000;text-align:center;font-size:14px"><span style="display:inline-block;transform:scaleX(0.9);transform-origin:center center">25/09/05</span></div>
<div class="t" style="left:67px;top:218px;width:46px;height:23px;line-height:23px;color:#000;text-align:right;font-size:14px"><span style="display:inline-block;transform:scaleX(0.85);transform-origin:right center">2,270</span></div>
<div class="t" style="left:117px;top:218px;width:46px;height:23px;line-height:23px;color:#000;text-align:right;font-size:14px"><span style="display:inline-block;transform:scaleX(0.85);transform-origin:right center">2,402</span></div>
<div class="t" style="left:167px;top:218px;width:46px;height:23px;line-height:23px;color:#000;text-align:right;font-size:14px"><span style="display:inline-block;transform:scaleX(0.85);transform-origin:right center">2,460</span></div>
<div class="t" style="left:217px;top:218px;width:46px;height:23px;line-height:23px;color:#000;text-align:right;font-size:14px"><span style="display:inline-block;transform:scaleX(0.85);transform-origin:right center">2,620</span></div>
<div class="t" style="left:267px;top:218px;width:46px;height:23px;line-height:23px;color:#000;text-align:right;font-size:14px"><span style="display:inline-block;transform:scaleX(0.85);transform-origin:right center">2,855</span></div>
<div class="t" style="left:317px;top:218px;width:46px;height:23px;line-height:23px;color:#000;text-align:right;font-size:14px"><span style="display:inline-block;transform:scaleX(0.85);transform-origin:right center">2,887</span></div>
<div class="t" style="left:367px;top:218px;width:46px;height:23px;line-height:23px;color:#000;text-align:right;font-size:14px"><span style="display:inline-block;transform:scaleX(0.85);transform-origin:right center">2,783</span></div>
<div class="t" style="left:417px;top:218px;width:46px;height:23px;line-height:23px;color:#000;text-align:right;font-size:14px"><span style="display:inline-block;transform:scaleX(0.85);transform-origin:right center">2,675</span></div>
<div class="t" style="left:467px;top:218px;width:46px;height:23px;line-height:23px;color:#000;text-align:right;font-size:14px"><span style="display:inline-block;transform:scaleX(0.85);transform-origin:right center">2,750</span></div>
<div class="t" style="left:517px;top:218px;width:46px;height:23px;line-height:23px;color:#000;text-align:right;font-size:14px"><span style="display:inline-block;transform:scaleX(0.85);transform-origin:right center">2,360</span></div>
<div class="t" style="left:567px;top:218px;width:46px;height:23px;line-height:23px;color:#000;text-align:right;font-size:14px"><span style="display:inline-block;transform:scaleX(0.85);transform-origin:right center">2,261</span></div>
<div class="t" style="left:617px;top:218px;width:46px;height:23px;line-height:23px;color:#000;text-align:right;font-size:14px"><span style="display:inline-block;transform:scaleX(0.85);transform-origin:right center">2,408</span></div>
<div class="t" style="left:667px;top:218px;width:46px;height:23px;line-height:23px;color:#000;text-align:right;font-size:14px"><span style="display:inline-block;transform:scaleX(0.85);transform-origin:right center">2,660</span></div>
<div class="t" style="left:717px;top:218px;width:46px;height:23px;line-height:23px;color:#000;text-align:right;font-size:14px"><span style="display:inline-block;transform:scaleX(0.85);transform-origin:right center">2,512</span></div>
<div class="t" style="left:767px;top:218px;width:46px;height:23px;line-height:23px;color:#000;text-align:right;font-size:14px"><span style="display:inline-block;transform:scaleX(0.85);transform-origin:right center">2,931</span></div>
<div class="t" style="left:817px;top:218px;width:51px;height:23px;line-height:23px;color:#000;text-align:right;font-size:14px"><span style="display:inline-block;transform:scaleX(0.85);transform-origin:right center">8,777</span></div>
<div class="t" style="left:872px;top:218px;width:46px;height:23px;line-height:23px;color:#000;text-align:right;font-size:14px"><span style="display:inline-block;transform:scaleX(0.85);transform-origin:right center">2,570</span></div>
<div class="t" style="left:922px;top:218px;width:46px;height:23px;line-height:23px;color:#000;text-align:right;font-size:14px"><span style="display:inline-block;transform:scaleX(0.85);transform-origin:right center">2,710</span></div>
<div class="t" style="left:2px;top:242px;width:64px;height:22px;line-height:22px;color:#000;text-align:center;font-size:14px"><span style="display:inline-block;transform:scaleX(0.9);transform-origin:center center">25/09/04</span></div>
<div class="t" style="left:67px;top:242px;width:46px;height:22px;line-height:22px;color:#000;text-align:right;font-size:14px"><span style="display:inline-block;transform:scaleX(0.85);transform-origin:right center">2,269</span></div>
<div class="t" style="left:117px;top:242px;width:46px;height:22px;line-height:22px;color:#000;text-align:right;font-size:14px"><span style="display:inline-block;transform:scaleX(0.85);transform-origin:right center">2,409</span></div>
<div class="t" style="left:167px;top:242px;width:46px;height:22px;line-height:22px;color:#000;text-align:right;font-size:14px"><span style="display:inline-block;transform:scaleX(0.85);transform-origin:right center">2,472</span></div>
<div class="t" style="left:217px;top:242px;width:46px;height:22px;line-height:22px;color:#000;text-align:right;font-size:14px"><span style="display:inline-block;transform:scaleX(0.85);transform-origin:right center">2,643</span></div>
<div class="t" style="left:267px;top:242px;width:46px;height:22px;line-height:22px;color:#000;text-align:right;font-size:14px"><span style="display:inline-block;transform:scaleX(0.85);transform-origin:right center">2,883</span></div>
<div class="t" style="left:317px;top:242px;width:46px;height:22px;line-height:22px;color:#000;text-align:right;font-size:14px"><span style="display:inline-block;transform:scaleX(0.85);transform-origin:right center">2,906</span></div>
<div class="t" style="left:367px;top:242px;width:46px;height:22px;line-height:22px;color:#000;text-align:right;font-size:14px"><span style="display:inline-block;transform:scaleX(0.85);transform-origin:right center">2,798</span></div>
<div class="t" style="left:417px;top:242px;width:46px;height:22px;line-height:22px;color:#000;text-align:right;font-size:14px"><span style="display:inline-block;transform:scaleX(0.85);transform-origin:right center">2,687</span></div>
<div class="t" style="left:467px;top:242px;width:46px;height:22px;line-height:22px;color:#000;text-align:right;font-size:14px"><span style="display:inline-block;transform:scaleX(0.85);transform-origin:right center">2,766</span></div>
<div class="t" style="left:517px;top:242px;width:46px;height:22px;line-height:22px;color:#000;text-align:right;font-size:14px"><span style="display:inline-block;transform:scaleX(0.85);transform-origin:right center">2,361</span></div>
<div class="t" style="left:567px;top:242px;width:46px;height:22px;line-height:22px;color:#000;text-align:right;font-size:14px"><span style="display:inline-block;transform:scaleX(0.85);transform-origin:right center">2,261</span></div>
<div class="t" style="left:617px;top:242px;width:46px;height:22px;line-height:22px;color:#000;text-align:right;font-size:14px"><span style="display:inline-block;transform:scaleX(0.85);transform-origin:right center">2,408</span></div>
<div class="t" style="left:667px;top:242px;width:46px;height:22px;line-height:22px;color:#000;text-align:right;font-size:14px"><span style="display:inline-block;transform:scaleX(0.85);transform-origin:right center">2,669</span></div>
<div class="t" style="left:717px;top:242px;width:46px;height:22px;line-height:22px;color:#000;text-align:right;font-size:14px"><span style="display:inline-block;transform:scaleX(0.85);transform-origin:right center">2,516</span></div>
<div class="t" style="left:767px;top:242px;width:46px;height:22px;line-height:22px;color:#000;text-align:right;font-size:14px"><span style="display:inline-block;transform:scaleX(0.85);transform-origin:right center">2,943</span></div>
<div class="t" style="left:817px;top:242px;width:51px;height:22px;line-height:22px;color:#000;text-align:right;font-size:14px"><span style="display:inline-block;transform:scaleX(0.85);transform-origin:right center">8,785</span></div>
<div class="t" style="left:872px;top:242px;width:46px;height:22px;line-height:22px;color:#000;text-align:right;font-size:14px"><span style="display:inline-block;transform:scaleX(0.85);transform-origin:right center">2,560</span></div>
<div class="t" style="left:922px;top:242px;width:46px;height:22px;line-height:22px;color:#000;text-align:right;font-size:14px"><span style="display:inline-block;transform:scaleX(0.85);transform-origin:right center">2,710</span></div>
<div style="left:1px;top:275px;width:540px;height:288px;background:#6d7f92"></div>
<div style="left:2px;top:276px;width:538px;height:286px;background:#fff"></div>
<div class="t" style="left:6px;top:279px;height:14px;line-height:14px;color:#dd0000;overflow:visible;letter-spacing:-1px">국고<span style="letter-spacing:-1.2px">3Y</span></div>
<div class="t" style="left:48px;top:279px;height:14px;line-height:14px;color:#ff00ff;overflow:visible;letter-spacing:-1px">국고<span style="letter-spacing:-1.2px">5Y</span></div>
<div class="t" style="left:90px;top:279px;height:14px;line-height:14px;color:#000080;overflow:visible;letter-spacing:-1px">국고<span style="letter-spacing:-1.2px">10Y</span></div>
<div class="t" style="left:137px;top:279px;height:14px;line-height:14px;color:#5cd000;overflow:visible;letter-spacing:-1px">회사<span style="letter-spacing:-1.2px">AA-</span></div>
<svg width="538" height="286" viewBox="2 276 538 286" style="position:absolute;left:2px;top:276px;overflow:hidden">
<defs><clipPath id="pc"><rect x="2" y="276" width="538" height="268"/></clipPath></defs>
<line x1="12.5" y1="276" x2="12.5" y2="544" stroke="#e6e6e6" stroke-width="1"/>
<line x1="12.5" y1="545" x2="12.5" y2="549" stroke="#707070" stroke-width="1"/>
<line x1="100.5" y1="276" x2="100.5" y2="544" stroke="#e6e6e6" stroke-width="1"/>
<line x1="100.5" y1="545" x2="100.5" y2="549" stroke="#707070" stroke-width="1"/>
<line x1="132.5" y1="276" x2="132.5" y2="544" stroke="#e6e6e6" stroke-width="1"/>
<line x1="132.5" y1="545" x2="132.5" y2="549" stroke="#707070" stroke-width="1"/>
<line x1="180.5" y1="276" x2="180.5" y2="544" stroke="#e6e6e6" stroke-width="1"/>
<line x1="180.5" y1="545" x2="180.5" y2="549" stroke="#707070" stroke-width="1"/>
<line x1="228.5" y1="276" x2="228.5" y2="544" stroke="#e6e6e6" stroke-width="1"/>
<line x1="228.5" y1="545" x2="228.5" y2="549" stroke="#707070" stroke-width="1"/>
<line x1="284.5" y1="276" x2="284.5" y2="544" stroke="#e6e6e6" stroke-width="1"/>
<line x1="284.5" y1="545" x2="284.5" y2="549" stroke="#707070" stroke-width="1"/>
<line x1="316.5" y1="276" x2="316.5" y2="544" stroke="#e6e6e6" stroke-width="1"/>
<line x1="316.5" y1="545" x2="316.5" y2="549" stroke="#707070" stroke-width="1"/>
<line x1="364.5" y1="276" x2="364.5" y2="544" stroke="#e6e6e6" stroke-width="1"/>
<line x1="364.5" y1="545" x2="364.5" y2="549" stroke="#707070" stroke-width="1"/>
<line x1="444.5" y1="276" x2="444.5" y2="544" stroke="#e6e6e6" stroke-width="1"/>
<line x1="444.5" y1="545" x2="444.5" y2="549" stroke="#707070" stroke-width="1"/>
<line x1="476.5" y1="276" x2="476.5" y2="544" stroke="#e6e6e6" stroke-width="1"/>
<line x1="476.5" y1="545" x2="476.5" y2="549" stroke="#707070" stroke-width="1"/>
<line x1="2" y1="544.5" x2="540" y2="544.5" stroke="#707070" stroke-width="1"/>
<g clip-path="url(#pc)" fill="none" stroke-width="1" shape-rendering="crispEdges">
<polyline points="12.5,525.0 20.5,542.0 28.5,530.7 36.5,529.1 44.5,534.7 52.5,518.7 60.5,536.4 68.5,536.3 76.5,539.0 84.5,539.0 92.5,540.0 100.5,539.2 108.5,525.4 116.5,541.4 124.5,533.6 132.5,526.4 140.5,527.9 148.5,527.0 156.5,548.0 164.5,546.0 172.5,529.2 180.5,534.7 188.5,536.5 196.5,527.0 204.5,528.6 212.5,538.0 220.5,535.2 228.5,537.4 236.5,533.0 244.5,524.2 252.5,533.8 260.5,535.4 268.5,539.1 276.5,535.8 284.5,527.0 292.5,551.0 300.5,555.0 308.5,551.0 316.5,560.0 324.5,559.0 332.5,554.0 340.5,547.0 348.5,549.0 356.5,557.0 364.5,547.0 372.5,547.0 380.5,549.0 388.5,548.0 396.5,538.4 404.5,549.0 412.5,552.0 420.5,560.0 428.5,558.0 436.5,556.0 444.5,550.0 452.5,541.2 460.5,529.4 468.5,530.4 476.5,535.3 484.5,540.5 492.5,551.0 500.5,549.0 508.5,555.0 516.5,552.0 524.5,549.0" stroke="#dd0000"/>
<polyline points="12.5,459.0 20.5,464.1 28.5,452.9 36.5,451.3 44.5,453.1 52.5,440.8 60.5,462.3 68.5,461.2 76.5,470.0 84.5,477.2 92.5,474.4 100.5,478.8 108.5,461.9 116.5,471.7 124.5,460.6 132.5,452.4 140.5,453.1 148.5,453.1 156.5,473.9 164.5,468.4 172.5,445.4 180.5,448.7 188.5,450.2 196.5,440.4 204.5,448.0 212.5,456.8 220.5,459.0 228.5,462.7 236.5,457.5 244.5,452.4 252.5,463.2 260.5,464.3 268.5,471.1 276.5,475.0 284.5,459.5 292.5,483.8 300.5,488.2 308.5,484.2 316.5,493.5 324.5,492.6 332.5,486.9 340.5,478.3 348.5,482.5 356.5,490.8 364.5,474.4 372.5,464.5 380.5,465.2 388.5,467.1 396.5,458.6 404.5,469.6 412.5,472.2 420.5,483.8 428.5,481.0 436.5,478.3 444.5,471.1 452.5,463.4 460.5,444.8 468.5,449.1 476.5,460.1 484.5,466.3 492.5,477.7 500.5,485.4 508.5,490.2 516.5,487.1 524.5,478.1" stroke="#ff00ff"/>
<polyline points="12.5,345.3 20.5,343.2 28.5,339.6 36.5,340.0 44.5,343.0 52.5,341.2 60.5,363.8 68.5,366.0 76.5,380.9 84.5,382.4 92.5,373.2 100.5,383.0 108.5,360.0 116.5,368.8 124.5,362.5 132.5,357.0 140.5,353.4 148.5,350.6 156.5,368.8 164.5,364.2 172.5,334.8 180.5,339.2 188.5,339.2 196.5,325.8 204.5,340.7 212.5,349.5 220.5,357.2 228.5,361.1 236.5,352.8 244.5,349.5 252.5,361.1 260.5,364.4 268.5,377.4 276.5,382.0 284.5,360.5 292.5,386.8 300.5,390.5 308.5,385.3 316.5,388.4 324.5,387.5 332.5,384.0 340.5,374.8 348.5,371.5 356.5,381.3 364.5,359.0 372.5,348.0 380.5,350.3 388.5,354.1 396.5,347.3 404.5,351.0 412.5,347.3 420.5,363.1 428.5,368.2 436.5,368.2 444.5,353.9 452.5,344.0 460.5,322.5 468.5,336.4 476.5,349.5 484.5,352.8 492.5,367.1 500.5,360.5 508.5,369.3 516.5,369.3 524.5,365.3" stroke="#000080"/>
<polyline points="12.5,274.0 20.5,289.0 28.5,282.8 36.5,279.2 44.5,283.4 52.5,275.7 60.5,290.0 68.5,291.6 76.5,294.8 84.5,296.2 92.5,298.0 100.5,300.1 108.5,292.0 116.5,303.4 124.5,297.6 132.5,293.6 140.5,295.5 148.5,296.4 156.5,314.6 164.5,310.7 172.5,300.6 180.5,303.2 188.5,304.5 196.5,296.8 204.5,299.7 212.5,305.0 220.5,303.4 228.5,304.0 236.5,300.1 244.5,293.6 252.5,300.1 260.5,303.4 268.5,306.3 276.5,303.4 284.5,295.7 292.5,320.3 300.5,320.3 308.5,319.4 316.5,327.6 324.5,327.6 332.5,324.3 340.5,320.5 348.5,325.4 356.5,330.2 364.5,322.1 372.5,316.6 380.5,317.3 388.5,318.1 396.5,313.8 404.5,322.1 412.5,326.5 420.5,334.2 428.5,329.8 436.5,325.4 444.5,322.5 452.5,316.6 460.5,306.7 468.5,308.9 476.5,313.3 484.5,318.8 492.5,328.7 500.5,327.6 508.5,332.0 516.5,328.0 524.5,324.3" stroke="#5cd000"/>
</g></svg>
<div class="t" style="left:13px;top:546px;width:60px;height:14px;line-height:14px;color:#000;text-align:left;font-size:14px"><span style="display:inline-block;transform:scaleX(0.9);transform-origin:left center">06</span></div>
<div class="t" style="left:101px;top:546px;width:60px;height:14px;line-height:14px;color:#000;text-align:left;font-size:14px"><span style="display:inline-block;transform:scaleX(0.9);transform-origin:left center">07</span></div>
<div class="t" style="left:133px;top:546px;width:60px;height:14px;line-height:14px;color:#000;text-align:left;font-size:14px"><span style="display:inline-block;transform:scaleX(0.9);transform-origin:left center">07/07</span></div>
<div class="t" style="left:181px;top:546px;width:60px;height:14px;line-height:14px;color:#000;text-align:left;font-size:14px"><span style="display:inline-block;transform:scaleX(0.9);transform-origin:left center">07/15</span></div>
<div class="t" style="left:229px;top:546px;width:60px;height:14px;line-height:14px;color:#000;text-align:left;font-size:14px"><span style="display:inline-block;transform:scaleX(0.9);transform-origin:left center">07/23</span></div>
<div class="t" style="left:285px;top:546px;width:60px;height:14px;line-height:14px;color:#000;text-align:left;font-size:14px"><span style="display:inline-block;transform:scaleX(0.9);transform-origin:left center">08</span></div>
<div class="t" style="left:317px;top:546px;width:60px;height:14px;line-height:14px;color:#000;text-align:left;font-size:14px"><span style="display:inline-block;transform:scaleX(0.9);transform-origin:left center">08/07</span></div>
<div class="t" style="left:365px;top:546px;width:60px;height:14px;line-height:14px;color:#000;text-align:left;font-size:14px"><span style="display:inline-block;transform:scaleX(0.9);transform-origin:left center">08/18</span></div>
<div class="t" style="left:445px;top:546px;width:60px;height:14px;line-height:14px;color:#000;text-align:left;font-size:14px"><span style="display:inline-block;transform:scaleX(0.9);transform-origin:left center">09</span></div>
<div class="t" style="left:477px;top:546px;width:60px;height:14px;line-height:14px;color:#000;text-align:left;font-size:14px"><span style="display:inline-block;transform:scaleX(0.9);transform-origin:left center">09/05</span></div>
<div class="t" style="left:535px;top:546px;width:60px;height:14px;line-height:14px;color:#000;text-align:left;font-size:14px"><span style="display:inline-block;transform:scaleX(0.9);transform-origin:left center">09/16</span></div>
<div style="left:540px;top:275px;width:1px;height:288px;background:#6d7f92"></div>
<div style="left:541px;top:270px;width:6px;height:295px;background:#dcdde1"></div>
<div style="left:547px;top:275px;width:425px;height:288px;background:#6d7f92"></div>
<div style="left:548px;top:276px;width:423px;height:286px;background:#fff"></div>
<div style="left:548px;top:299px;width:85px;height:263px;background:#d5e1ec"></div>
<div style="left:548px;top:276px;width:423px;height:23px;background:#2b68ad"></div>
<div style="left:633px;top:276px;width:1px;height:23px;background:#4f86c4"></div>
<div style="left:633px;top:299px;width:1px;height:262px;background:#a8bcd0"></div>
<div style="left:718px;top:276px;width:1px;height:23px;background:#4f86c4"></div>
<div style="left:718px;top:299px;width:1px;height:262px;background:#a8bcd0"></div>
<div style="left:803px;top:276px;width:1px;height:23px;background:#4f86c4"></div>
<div style="left:803px;top:299px;width:1px;height:262px;background:#a8bcd0"></div>
<div style="left:887px;top:276px;width:1px;height:23px;background:#4f86c4"></div>
<div style="left:887px;top:299px;width:1px;height:262px;background:#a8bcd0"></div>
<div class="t" style="left:541px;top:276px;width:85px;height:23px;line-height:23px;color:#fff;text-align:center">국고<span style="letter-spacing:-0.8px">5Y</span></div>
<div class="t" style="left:633px;top:276px;width:85px;height:23px;line-height:23px;color:#fff;text-align:center"><span style="letter-spacing:-0.8px">11</span>시<span style="letter-spacing:-0.8px">30</span>분</div>
<div class="t" style="left:718px;top:276px;width:85px;height:23px;line-height:23px;color:#fff;text-align:center"><span style="letter-spacing:-0.8px">16</span>시<span style="letter-spacing:-0.8px">00</span>분</div>
<div class="t" style="left:803px;top:276px;width:84px;height:23px;line-height:23px;color:#fff;text-align:center">전기</div>
<div class="t" style="left:887px;top:276px;width:84px;height:23px;line-height:23px;color:#fff;text-align:center">전기대비</div>
<svg style="position:absolute;left:627px;top:291px" width="5" height="5"><path d="M5 0 L5 5 L0 5 Z" fill="#fff"/></svg>
<div style="left:548px;top:321px;width:423px;height:1px;background:#a8bcd0"></div>
<div style="left:548px;top:345px;width:423px;height:1px;background:#a8bcd0"></div>
<div style="left:548px;top:369px;width:423px;height:1px;background:#a8bcd0"></div>
<div style="left:548px;top:393px;width:423px;height:1px;background:#a8bcd0"></div>
<div style="left:548px;top:416px;width:423px;height:1px;background:#a8bcd0"></div>
<div style="left:548px;top:440px;width:423px;height:1px;background:#a8bcd0"></div>
<div style="left:548px;top:464px;width:423px;height:1px;background:#a8bcd0"></div>
<div style="left:548px;top:488px;width:423px;height:1px;background:#a8bcd0"></div>
<div style="left:548px;top:512px;width:423px;height:1px;background:#a8bcd0"></div>
<div style="left:548px;top:535px;width:423px;height:1px;background:#a8bcd0"></div>
<div style="left:548px;top:559px;width:423px;height:1px;background:#a8bcd0"></div>
<div class="t" style="left:548px;top:299px;width:85px;height:22px;line-height:22px;color:#000;text-align:center;font-size:14px"><span style="display:inline-block;transform:scaleX(0.9);transform-origin:center center">25/09/15</span></div>
<div class="t" style="left:634px;top:299px;width:77px;height:22px;line-height:22px;color:#000;text-align:right;font-size:14px"><span style="display:inline-block;transform:scaleX(0.85);transform-origin:right center">2,591</span></div>
<div class="t" style="left:719px;top:299px;width:77px;height:22px;line-height:22px;color:#000;text-align:right;font-size:14px"><span style="display:inline-block;transform:scaleX(0.85);transform-origin:right center">2,584</span></div>
<div class="t" style="left:804px;top:299px;width:76px;height:22px;line-height:22px;color:#000;text-align:right;font-size:14px"><span style="display:inline-block;transform:scaleX(0.85);transform-origin:right center">2,564</span></div>
<div class="t" style="left:888px;top:299px;width:80px;height:22px;line-height:22px;color:#e00000;text-align:right;font-size:14px"><span style="display:inline-block;transform:scaleX(0.85);transform-origin:right center">0,020</span></div>
<div class="t" style="left:548px;top:322px;width:85px;height:23px;line-height:23px;color:#000;text-align:center;font-size:14px"><span style="display:inline-block;transform:scaleX(0.9);transform-origin:center center">25/09/12</span></div>
<div class="t" style="left:634px;top:322px;width:77px;height:23px;line-height:23px;color:#000;text-align:right;font-size:14px"><span style="display:inline-block;transform:scaleX(0.85);transform-origin:right center">2,555</span></div>
<div class="t" style="left:719px;top:322px;width:77px;height:23px;line-height:23px;color:#000;text-align:right;font-size:14px"><span style="display:inline-block;transform:scaleX(0.85);transform-origin:right center">2,564</span></div>
<div class="t" style="left:804px;top:322px;width:76px;height:23px;line-height:23px;color:#000;text-align:right;font-size:14px"><span style="display:inline-block;transform:scaleX(0.85);transform-origin:right center">2,557</span></div>
<div class="t" style="left:888px;top:322px;width:80px;height:23px;line-height:23px;color:#e00000;text-align:right;font-size:14px"><span style="display:inline-block;transform:scaleX(0.85);transform-origin:right center">0,007</span></div>
<div class="t" style="left:548px;top:346px;width:85px;height:23px;line-height:23px;color:#000;text-align:center;font-size:14px"><span style="display:inline-block;transform:scaleX(0.9);transform-origin:center center">25/09/11</span></div>
<div class="t" style="left:634px;top:346px;width:77px;height:23px;line-height:23px;color:#000;text-align:right;font-size:14px"><span style="display:inline-block;transform:scaleX(0.85);transform-origin:right center">2,557</span></div>
<div class="t" style="left:719px;top:346px;width:77px;height:23px;line-height:23px;color:#000;text-align:right;font-size:14px"><span style="display:inline-block;transform:scaleX(0.85);transform-origin:right center">2,557</span></div>
<div class="t" style="left:804px;top:346px;width:76px;height:23px;line-height:23px;color:#000;text-align:right;font-size:14px"><span style="display:inline-block;transform:scaleX(0.85);transform-origin:right center">2,566</span></div>
<div class="t" style="left:888px;top:346px;width:80px;height:23px;line-height:23px;color:#0000e0;text-align:right;font-size:14px"><span style="display:inline-block;transform:scaleX(0.85);transform-origin:right center"><span style="display:inline-block;width:6px;height:1px;background:currentColor;vertical-align:4px;margin-right:1px"></span>0,009</span></div>
<div class="t" style="left:548px;top:370px;width:85px;height:23px;line-height:23px;color:#000;text-align:center;font-size:14px"><span style="display:inline-block;transform:scaleX(0.9);transform-origin:center center">25/09/10</span></div>
<div class="t" style="left:634px;top:370px;width:77px;height:23px;line-height:23px;color:#000;text-align:right;font-size:14px"><span style="display:inline-block;transform:scaleX(0.85);transform-origin:right center">2,564</span></div>
<div class="t" style="left:719px;top:370px;width:77px;height:23px;line-height:23px;color:#000;text-align:right;font-size:14px"><span style="display:inline-block;transform:scaleX(0.85);transform-origin:right center">2,566</span></div>
<div class="t" style="left:804px;top:370px;width:76px;height:23px;line-height:23px;color:#000;text-align:right;font-size:14px"><span style="display:inline-block;transform:scaleX(0.85);transform-origin:right center">2,582</span></div>
<div class="t" style="left:888px;top:370px;width:80px;height:23px;line-height:23px;color:#0000e0;text-align:right;font-size:14px"><span style="display:inline-block;transform:scaleX(0.85);transform-origin:right center"><span style="display:inline-block;width:6px;height:1px;background:currentColor;vertical-align:4px;margin-right:1px"></span>0,016</span></div>
<div class="t" style="left:548px;top:394px;width:85px;height:22px;line-height:22px;color:#000;text-align:center;font-size:14px"><span style="display:inline-block;transform:scaleX(0.9);transform-origin:center center">25/09/09</span></div>
<div class="t" style="left:634px;top:394px;width:77px;height:22px;line-height:22px;color:#000;text-align:right;font-size:14px"><span style="display:inline-block;transform:scaleX(0.85);transform-origin:right center">2,581</span></div>
<div class="t" style="left:719px;top:394px;width:77px;height:22px;line-height:22px;color:#000;text-align:right;font-size:14px"><span style="display:inline-block;transform:scaleX(0.85);transform-origin:right center">2,582</span></div>
<div class="t" style="left:804px;top:394px;width:76px;height:22px;line-height:22px;color:#000;text-align:right;font-size:14px"><span style="display:inline-block;transform:scaleX(0.85);transform-origin:right center">2,608</span></div>
<div class="t" style="left:888px;top:394px;width:80px;height:22px;line-height:22px;color:#0000e0;text-align:right;font-size:14px"><span style="display:inline-block;transform:scaleX(0.85);transform-origin:right center"><span style="display:inline-block;width:6px;height:1px;background:currentColor;vertical-align:4px;margin-right:1px"></span>0,026</span></div>
<div class="t" style="left:548px;top:417px;width:85px;height:23px;line-height:23px;color:#000;text-align:center;font-size:14px"><span style="display:inline-block;transform:scaleX(0.9);transform-origin:center center">25/09/08</span></div>
<div class="t" style="left:634px;top:417px;width:77px;height:23px;line-height:23px;color:#000;text-align:right;font-size:14px"><span style="display:inline-block;transform:scaleX(0.85);transform-origin:right center">2,613</span></div>
<div class="t" style="left:719px;top:417px;width:77px;height:23px;line-height:23px;color:#000;text-align:right;font-size:14px"><span style="display:inline-block;transform:scaleX(0.85);transform-origin:right center">2,608</span></div>
<div class="t" style="left:804px;top:417px;width:76px;height:23px;line-height:23px;color:#000;text-align:right;font-size:14px"><span style="display:inline-block;transform:scaleX(0.85);transform-origin:right center">2,620</span></div>
<div class="t" style="left:888px;top:417px;width:80px;height:23px;line-height:23px;color:#0000e0;text-align:right;font-size:14px"><span style="display:inline-block;transform:scaleX(0.85);transform-origin:right center"><span style="display:inline-block;width:6px;height:1px;background:currentColor;vertical-align:4px;margin-right:1px"></span>0,012</span></div>
<div class="t" style="left:548px;top:441px;width:85px;height:23px;line-height:23px;color:#000;text-align:center;font-size:14px"><span style="display:inline-block;transform:scaleX(0.9);transform-origin:center center">25/09/05</span></div>
<div class="t" style="left:634px;top:441px;width:77px;height:23px;line-height:23px;color:#000;text-align:right;font-size:14px"><span style="display:inline-block;transform:scaleX(0.85);transform-origin:right center">2,627</span></div>
<div class="t" style="left:719px;top:441px;width:77px;height:23px;line-height:23px;color:#000;text-align:right;font-size:14px"><span style="display:inline-block;transform:scaleX(0.85);transform-origin:right center">2,620</span></div>
<div class="t" style="left:804px;top:441px;width:76px;height:23px;line-height:23px;color:#000;text-align:right;font-size:14px"><span style="display:inline-block;transform:scaleX(0.85);transform-origin:right center">2,643</span></div>
<div class="t" style="left:888px;top:441px;width:80px;height:23px;line-height:23px;color:#0000e0;text-align:right;font-size:14px"><span style="display:inline-block;transform:scaleX(0.85);transform-origin:right center"><span style="display:inline-block;width:6px;height:1px;background:currentColor;vertical-align:4px;margin-right:1px"></span>0,023</span></div>
<div class="t" style="left:548px;top:465px;width:85px;height:23px;line-height:23px;color:#000;text-align:center;font-size:14px"><span style="display:inline-block;transform:scaleX(0.9);transform-origin:center center">25/09/04</span></div>
<div class="t" style="left:634px;top:465px;width:77px;height:23px;line-height:23px;color:#000;text-align:right;font-size:14px"><span style="display:inline-block;transform:scaleX(0.85);transform-origin:right center">2,637</span></div>
<div class="t" style="left:719px;top:465px;width:77px;height:23px;line-height:23px;color:#000;text-align:right;font-size:14px"><span style="display:inline-block;transform:scaleX(0.85);transform-origin:right center">2,643</span></div>
<div class="t" style="left:804px;top:465px;width:76px;height:23px;line-height:23px;color:#000;text-align:right;font-size:14px"><span style="display:inline-block;transform:scaleX(0.85);transform-origin:right center">2,654</span></div>
<div class="t" style="left:888px;top:465px;width:80px;height:23px;line-height:23px;color:#0000e0;text-align:right;font-size:14px"><span style="display:inline-block;transform:scaleX(0.85);transform-origin:right center"><span style="display:inline-block;width:6px;height:1px;background:currentColor;vertical-align:4px;margin-right:1px"></span>0,011</span></div>
<div class="t" style="left:548px;top:489px;width:85px;height:23px;line-height:23px;color:#000;text-align:center;font-size:14px"><span style="display:inline-block;transform:scaleX(0.9);transform-origin:center center">25/09/03</span></div>
<div class="t" style="left:634px;top:489px;width:77px;height:23px;line-height:23px;color:#000;text-align:right;font-size:14px"><span style="display:inline-block;transform:scaleX(0.85);transform-origin:right center">2,639</span></div>
<div class="t" style="left:719px;top:489px;width:77px;height:23px;line-height:23px;color:#000;text-align:right;font-size:14px"><span style="display:inline-block;transform:scaleX(0.85);transform-origin:right center">2,654</span></div>
<div class="t" style="left:804px;top:489px;width:76px;height:23px;line-height:23px;color:#000;text-align:right;font-size:14px"><span style="display:inline-block;transform:scaleX(0.85);transform-origin:right center">2,619</span></div>
<div class="t" style="left:888px;top:489px;width:80px;height:23px;line-height:23px;color:#e00000;text-align:right;font-size:14px"><span style="display:inline-block;transform:scaleX(0.85);transform-origin:right center">0,035</span></div>
<div class="t" style="left:548px;top:513px;width:85px;height:22px;line-height:22px;color:#000;text-align:center;font-size:14px"><span style="display:inline-block;transform:scaleX(0.9);transform-origin:center center">25/09/02</span></div>
<div class="t" style="left:634px;top:513px;width:77px;height:22px;line-height:22px;color:#000;text-align:right;font-size:14px"><span style="display:inline-block;transform:scaleX(0.85);transform-origin:right center">2,605</span></div>
<div class="t" style="left:719px;top:513px;width:77px;height:22px;line-height:22px;color:#000;text-align:right;font-size:14px"><span style="display:inline-block;transform:scaleX(0.85);transform-origin:right center">2,619</span></div>
<div class="t" style="left:804px;top:513px;width:76px;height:22px;line-height:22px;color:#000;text-align:right;font-size:14px"><span style="display:inline-block;transform:scaleX(0.85);transform-origin:right center">2,597</span></div>
<div class="t" style="left:888px;top:513px;width:80px;height:22px;line-height:22px;color:#e00000;text-align:right;font-size:14px"><span style="display:inline-block;transform:scaleX(0.85);transform-origin:right center">0,022</span></div>
<div class="t" style="left:548px;top:536px;width:85px;height:23px;line-height:23px;color:#000;text-align:center;font-size:14px"><span style="display:inline-block;transform:scaleX(0.9);transform-origin:center center">25/09/01</span></div>
<div class="t" style="left:634px;top:536px;width:77px;height:23px;line-height:23px;color:#000;text-align:right;font-size:14px"><span style="display:inline-block;transform:scaleX(0.85);transform-origin:right center">2,588</span></div>
<div class="t" style="left:719px;top:536px;width:77px;height:23px;line-height:23px;color:#000;text-align:right;font-size:14px"><span style="display:inline-block;transform:scaleX(0.85);transform-origin:right center">2,597</span></div>
<div class="t" style="left:804px;top:536px;width:76px;height:23px;line-height:23px;color:#000;text-align:right;font-size:14px"><span style="display:inline-block;transform:scaleX(0.85);transform-origin:right center">2,583</span></div>
<div class="t" style="left:888px;top:536px;width:80px;height:23px;line-height:23px;color:#e00000;text-align:right;font-size:14px"><span style="display:inline-block;transform:scaleX(0.85);transform-origin:right center">0,014</span></div>
<div style="left:972px;top:5px;width:1px;height:264px;background:#fff"></div>
<div style="left:972px;top:276px;width:1px;height:286px;background:#fff"></div>
</body></html>
